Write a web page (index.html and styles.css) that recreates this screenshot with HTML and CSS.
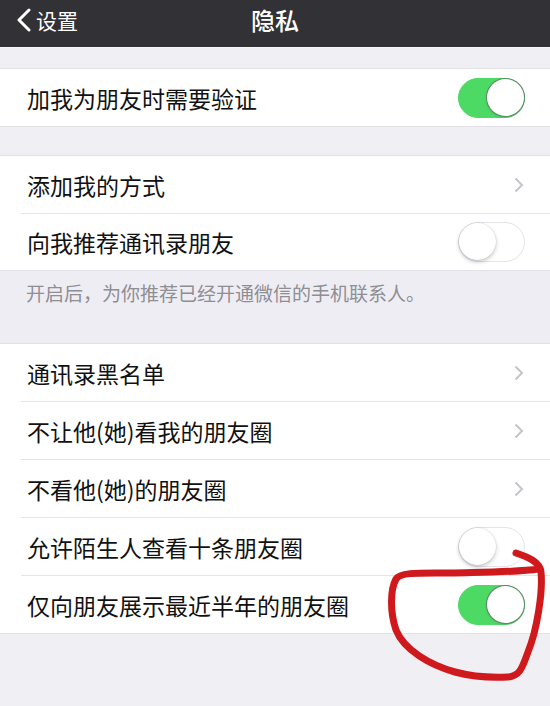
FILE: index.html
```html
<!DOCTYPE html>
<html lang="zh">
<head>
<meta charset="utf-8">
<title>隐私</title>
<link rel="stylesheet" href="styles.css">
</head>
<body>
<div class="screen">
  <header class="navbar">
    <div class="back">
      <svg class="back-icon" viewBox="0 0 16 24" width="16" height="24"><path d="M13 2 L3 12 L13 22" fill="none" stroke="#ffffff" stroke-width="3" stroke-linecap="round" stroke-linejoin="round"/></svg>
      <span class="back-label">设置</span>
    </div>
    <div class="title">隐私</div>
  </header>

  <section class="group group-first">
    <div class="row"><span class="label">加我为朋友时需要验证</span><span class="switch on"><span class="knob"></span></span></div>
  </section>

  <section class="group group-second">
    <div class="row"><span class="label">添加我的方式</span><svg class="chev" viewBox="0 0 10 16" width="10" height="16"><path d="M1.5 1.5 L8 8 L1.5 14.5" fill="none" stroke="#c4c4c9" stroke-width="2"/></svg></div>
    <div class="row row-short"><span class="label">向我推荐通讯录朋友</span><span class="switch"><span class="knob"></span></span></div>
  </section>
  <p class="hint">开启后，为你推荐已经开通微信的手机联系人。</p>

  <section class="group">
    <div class="row"><span class="label">通讯录黑名单</span><svg class="chev" viewBox="0 0 10 16" width="10" height="16"><path d="M1.5 1.5 L8 8 L1.5 14.5" fill="none" stroke="#c4c4c9" stroke-width="2"/></svg></div>
    <div class="row"><span class="label">不让他(她)看我的朋友圈</span><svg class="chev" viewBox="0 0 10 16" width="10" height="16"><path d="M1.5 1.5 L8 8 L1.5 14.5" fill="none" stroke="#c4c4c9" stroke-width="2"/></svg></div>
    <div class="row"><span class="label">不看他(她)的朋友圈</span><svg class="chev" viewBox="0 0 10 16" width="10" height="16"><path d="M1.5 1.5 L8 8 L1.5 14.5" fill="none" stroke="#c4c4c9" stroke-width="2"/></svg></div>
    <div class="row"><span class="label">允许陌生人查看十条朋友圈</span><span class="switch"><span class="knob"></span></span></div>
    <div class="row"><span class="label">仅向朋友展示最近半年的朋友圈</span><span class="switch on"><span class="knob"></span></span></div>
  </section>

  <svg class="scribble" viewBox="0 0 550 706" width="550" height="706">
    <path d="M516,553 C528,557 540,562 541,572 C543,592 537,630 528,652 C523,665 521,676 508,677 C490,678 470,676 455,672 C430,665 404,650 396,630 C390,612 390,590 396,579 C400,572 420,573 450,573 C490,572 520,572 538,569" fill="none" stroke="#d0191d" stroke-width="7" stroke-linecap="round" stroke-linejoin="round"/>
  </svg>
</div>
</body>
</html>
```

FILE: styles.css
```css
* { box-sizing: border-box; }
html, body { margin: 0; padding: 0; }
body {
  background: #efeff4;
  font-family: "Noto Sans CJK SC", "Noto Sans", sans-serif;
  color: #111111;
}
.screen {
  position: relative;
  width: 550px;
  height: 706px;
  overflow: hidden;
  background: #efeff4;
}
.navbar {
  height: 48px;
  background: #323136;
  border-bottom: 1px solid #f7f7f9;
  display: flex;
  align-items: center;
  justify-content: center;
  position: relative;
  padding-bottom: 7px;
}
.back {
  position: absolute;
  left: 16px;
  top: 8px;
  display: flex;
  align-items: center;
  gap: 4px;
  color: #ffffff;
}
.back-icon { display: block; }
.back-label { font-size: 21px; line-height: 24px; }
.title {
  color: #ffffff;
  font-size: 24px;
  line-height: 28px;
  font-weight: 500;
}
.group {
  background: #ffffff;
  border-top: 1px solid #e2e2e6;
  border-bottom: 1px solid #e2e2e6;
}
.group-first { margin-top: 20px; }
.group-second { margin-top: 28px; }
.row {
  height: 57px;
  display: flex;
  align-items: center;
  justify-content: space-between;
  padding: 0 26px 0 27px;
  position: relative;
}
.row-short { height: 56px; }
.row + .row::before {
  content: "";
  position: absolute;
  left: 21px;
  right: 0;
  top: -1px;
  height: 1px;
  background: #e4e4e8;
}
.row + .row { margin-top: 1px; }
.label {
  font-size: 23px;
  line-height: 30px;
  color: #111111;
}
.chev { display: block; margin-right: 0; }
.switch {
  width: 67px;
  height: 40px;
  border-radius: 20px;
  background: #ffffff;
  border: 1.5px solid #e3e3e8;
  position: relative;
  margin-right: -1px;
  flex: none;
}
.switch .knob {
  position: absolute;
  left: 0;
  top: 0;
  width: 37px;
  height: 37px;
  border-radius: 50%;
  background: #ffffff;
  box-shadow: 0 2px 4px rgba(0,0,0,0.22), 0 0 0 0.5px rgba(0,0,0,0.08);
}
.switch.on {
  background: #4cd964;
  border-color: #4cd964;
}
.switch.on .knob {
  left: auto;
  right: 0;
  box-shadow: 0 0 0 1px #5b8a66, 0 1px 3px rgba(0,0,0,0.2);
}
.hint {
  margin: 0;
  height: 72px;
  padding: 9px 0 0 26px;
  font-size: 19px;
  line-height: 26px;
  color: #8e8e93;
  background: #eeedf3;
}
.scribble {
  position: absolute;
  left: 0;
  top: 0;
  pointer-events: none;
}
```
